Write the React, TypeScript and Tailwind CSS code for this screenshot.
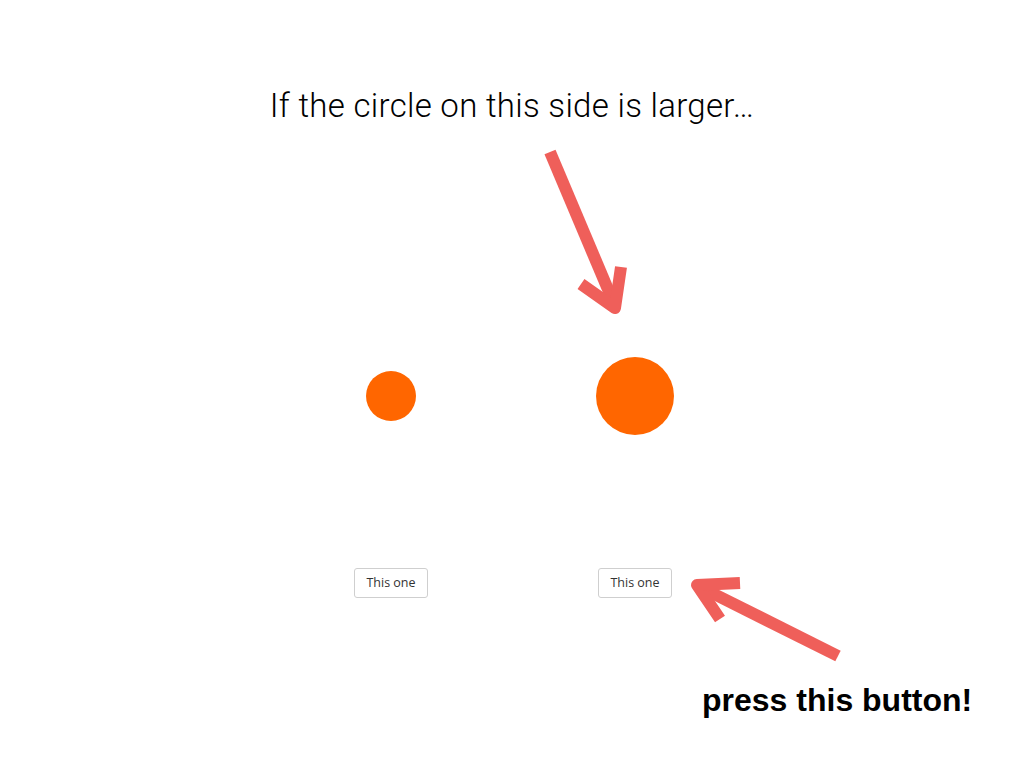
export default function App() {
  const choices = [{ size: 'w-[50px] h-[50px]' }, { size: 'w-[78px] h-[78px]' }]

  return (
    <div className="relative w-[1024px] h-[768px] bg-white overflow-hidden">
      <h1
        className="pt-[86px] text-center text-[33px] leading-[40px] tracking-[0.3px] font-light text-black"
        style={{ fontFamily: 'Roboto, "Liberation Sans", sans-serif' }}
      >
        If the circle on this side is larger…
      </h1>

      <div className="mt-[230px] pl-[2px] flex justify-center">
        {choices.map((c, i) => (
          <div key={i} className="w-[244px] flex flex-col items-center">
            <div className="h-[80px] flex items-center justify-center">
              <div className={`${c.size} rounded-full bg-[#ff6600]`}></div>
            </div>
            <button
              className="mt-[132px] h-[30px] px-[11px] pt-[1px] bg-white border border-[#cfcfcf] rounded-[3px] text-[12.5px] text-[#333]"
              style={{ fontFamily: '"Open Sans", sans-serif' }}
            >
              This one
            </button>
          </div>
        ))}
      </div>

      {/* annotations */}
      <svg className="absolute inset-0 pointer-events-none" width="1024" height="768">
        <g stroke="#ef5f5a" strokeWidth="12" fill="none" strokeLinejoin="round">
          <line x1="550" y1="152" x2="615" y2="306" />
          <polyline points="581,284 615,308 621,267" />
          <line x1="838" y1="656" x2="700" y2="587" />
          <polyline points="740,583 697,585 720,619" />
        </g>
      </svg>

      <p
        className="absolute left-[702px] top-[680px] text-[32px] leading-[40px] font-bold text-black"
        style={{ fontFamily: '"Liberation Sans", Arial, sans-serif' }}
      >
        press this button!
      </p>
    </div>
  )
}
